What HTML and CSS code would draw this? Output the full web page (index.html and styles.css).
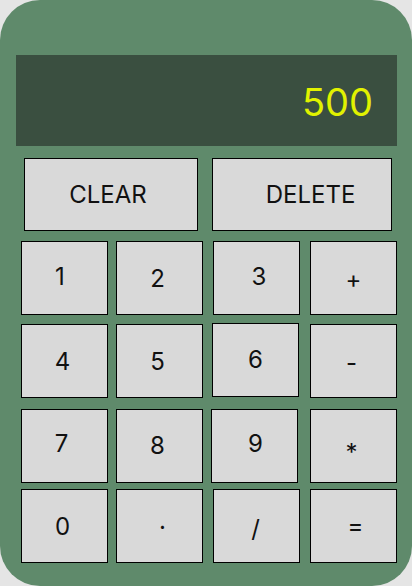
FILE: index.html
```html
<!DOCTYPE html>
<html>
<head>
<meta charset="utf-8">
<link rel="stylesheet" href="styles.css">
</head>
<body>
<div class="calc">
  <div class="display"><span class="value">500</span></div>
  <div class="actions">
    <button class="key wide clear">CLEAR</button>
    <button class="key wide delete">DELETE</button>
  </div>
  <div class="pad">
    <button class="key k1">1</button>
    <button class="key k2">2</button>
    <button class="key k3">3</button>
    <button class="key kplus">+</button>
    <button class="key k4">4</button>
    <button class="key k5">5</button>
    <button class="key k6">6</button>
    <button class="key kminus">-</button>
    <button class="key k7">7</button>
    <button class="key k8">8</button>
    <button class="key k9">9</button>
    <button class="key kmul">*</button>
    <button class="key k0">0</button>
    <button class="key kdot">.</button>
    <button class="key kdiv">/</button>
    <button class="key keq">=</button>
  </div>
</div>
</body>
</html>
```

FILE: styles.css
```css
html, body {
  margin: 0;
  padding: 0;
  background: #e5e5e5;
}
body {
  width: 412px;
  height: 586px;
  overflow: hidden;
  font-family: Inter, "Noto Sans", sans-serif;
}
.calc {
  width: 412px;
  height: 586px;
  box-sizing: border-box;
  background: #5f8a6b;
  border-radius: 40px;
  padding-top: 55px;
  display: flex;
  flex-direction: column;
}
.display {
  margin-left: 16px;
  width: 381px;
  height: 91px;
  background: #3a4f40;
  display: flex;
  align-items: center;
  justify-content: flex-end;
  box-sizing: border-box;
  padding-right: 24px;
}
.value {
  color: #e1f200;
  font-size: 38px;
  line-height: 1;
  padding-top: 2px;
}
.actions {
  display: flex;
  margin-top: 12px;
  margin-left: 24px;
  gap: 14px;
}
.key {
  font-family: Inter, "Noto Sans", sans-serif;
  background: #d9d9d9;
  border: 1px solid #000;
  border-radius: 0;
  color: #111;
  font-size: 24px;
  padding: 0;
  margin: 0;
  width: 87px;
  height: 74px;
  box-sizing: border-box;
  display: flex;
  align-items: center;
  justify-content: center;
}
.key.wide {
  height: 73px;
}
.clear { width: 174px; padding-right: 6px; }
.delete { width: 180px; padding-left: 17px; }
.pad {
  margin-top: 10px;
  margin-left: 21px;
  display: grid;
  grid-template-columns: 95px 97px 97px 87px;
  grid-template-rows: 83px 85px 80px 74px;
}
/* label placement inside each key */
.k1 { padding: 0 9px 4px 0; }
.k2 { padding: 0 4px 0 0; }
.k3 { padding: 0 0 3px 5px; }
.kplus { padding: 2px 0 0 0; }
.k4 { padding: 0 4px 0 0; }
.k5 { padding: 0 4px 0 0; }
.k6 { margin: -1px 0 0 -1px; padding: 0 0 2px 0; }
.kminus { padding: 2px 4px 0 0; }
.k7 { padding: 0 6px 6px 0; }
.k8 { padding: 0 4px 2px 0; }
.k9 { margin-left: -2px; padding: 0 0 6px 2px; }
.kmul { padding: 12px 4px 0 0; }
.k0 { padding: 0 4px 0 0; }
.kdot { padding: 0 0 12px 6px; }
.kdiv { padding: 5px 2px 0 0; }
.keq { padding: 0 0 2px 4px; }
```
